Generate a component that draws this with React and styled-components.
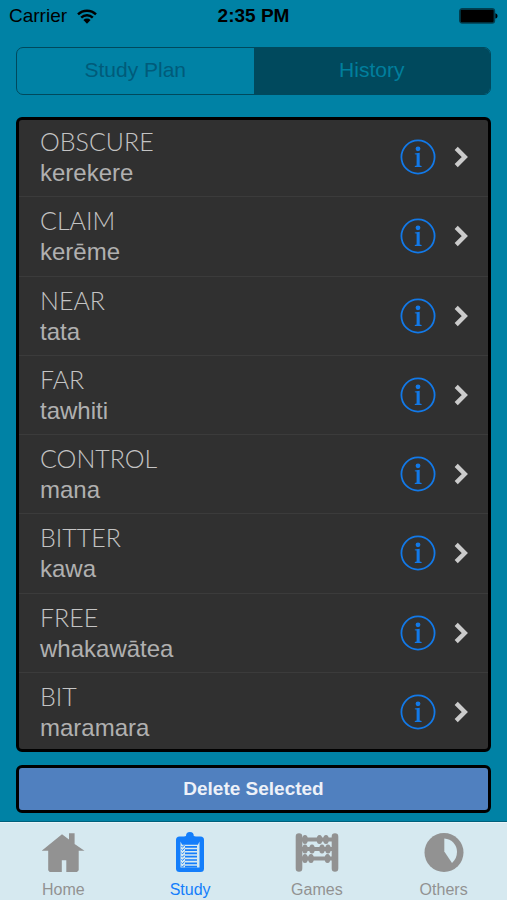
import { useState } from "react";
import styled, { createGlobalStyle } from "styled-components";

const WORDS = [
  { english: "OBSCURE", maori: "kerekere" },
  { english: "CLAIM", maori: "kerēme" },
  { english: "NEAR", maori: "tata" },
  { english: "FAR", maori: "tawhiti" },
  { english: "CONTROL", maori: "mana" },
  { english: "BITTER", maori: "kawa" },
  { english: "FREE", maori: "whakawātea" },
  { english: "BIT", maori: "maramara" },
];

const TABS = [
  { label: "Home", Icon: HomeIcon },
  { label: "Study", Icon: StudyIcon },
  { label: "Games", Icon: AbacusIcon },
  { label: "Others", Icon: PieIcon },
];

const BEADS = [
  [10, 7.5],
  [24.5, 7.5],
  [31, 7.5],
  [10, 17],
  [17, 17],
  [27, 17],
  [33, 17],
  [10, 26.5],
  [16, 26.5],
  [32.5, 26.5],
];

const App = () => {
  const [segment, setSegment] = useState("History");
  const [tab, setTab] = useState("Study");

  return (
    <Screen>
      <GlobalStyle />
      <StatusBar>
        <Carrier>
          Carrier
          <WifiIcon />
        </Carrier>
        <Clock>2:35 PM</Clock>
        <Battery>
          <BatteryIcon />
        </Battery>
      </StatusBar>

      <Content>
        <Segmented>
          {["Study Plan", "History"].map((name) => (
            <Segment
              key={name}
              type="button"
              aria-pressed={segment === name}
              $selected={segment === name}
              onClick={() => setSegment(name)}
            >
              {name}
            </Segment>
          ))}
        </Segmented>

        <Panel>
          <WordList>
            {WORDS.map(({ english, maori }) => (
              <WordRow key={english}>
                <Word>
                  <English>{english}</English>
                  <Maori>{maori}</Maori>
                </Word>
                <IconButton type="button" aria-label={`About ${english}`}>
                  <InfoIcon />
                </IconButton>
                <IconButton type="button" aria-label={`Open ${english}`}>
                  <ChevronIcon />
                </IconButton>
              </WordRow>
            ))}
          </WordList>
        </Panel>

        <DeleteButton type="button">Delete Selected</DeleteButton>
      </Content>

      <TabBar>
        {TABS.map(({ label, Icon }) => (
          <Tab
            key={label}
            href={`#${label.toLowerCase()}`}
            $active={tab === label}
            onClick={() => setTab(label)}
          >
            <Icon />
            {label}
          </Tab>
        ))}
      </TabBar>
    </Screen>
  );
};

export default App;

// Icons
function WifiIcon() {
  return (
    <svg width="20" height="15" viewBox="0 0 20 15" aria-hidden="true">
      <g fill="none" stroke="#000" strokeWidth="2.4">
        <path d="M1 5.4a12.8 12.8 0 0 1 18 0" />
        <path d="M4.2 8.7a8.2 8.2 0 0 1 11.6 0" />
      </g>
      <path d="M6.4 11a5.1 5.1 0 0 1 7.2 0L10 14.7z" />
    </svg>
  );
}

function BatteryIcon() {
  return (
    <svg width="39" height="16" viewBox="0 0 39 16" aria-hidden="true">
      <rect x="0.6" y="0.6" width="35" height="14.6" rx="2.6" fill="none" stroke="#003f50" strokeWidth="1.2" />
      <rect x="1.4" y="1.4" width="33.4" height="13" rx="1.4" />
      <path d="M36.4 5.2c2.8.6 2.8 4.8 0 5.4z" />
    </svg>
  );
}

function InfoIcon() {
  return (
    <svg width="36" height="36" viewBox="0 0 36 36" aria-hidden="true">
      <circle cx="18" cy="18" r="16.6" fill="none" stroke="#1279e8" strokeWidth="1.8" />
      <g fill="#1279e8">
        <circle cx="18" cy="9.8" r="2.4" />
        <path d="M14.8 14.4l4.9-.7v12.9l1.9.4v.9h-6.800V27l1.800-.4V15.500l-1.800-.3z" />
      </g>
    </svg>
  );
}

function ChevronIcon() {
  return (
    <svg width="14" height="22" viewBox="0 0 14 22" aria-hidden="true">
      <path d="M2.200 2.400l8.600 8.600-8.600 8.600" fill="none" stroke="#cbcbcb" strokeWidth="4.400" />
    </svg>
  );
}

function HomeIcon() {
  return (
    <svg width="44" height="42" viewBox="0 0 44 42" aria-hidden="true">
      <path
        fill="currentColor"
        d="M21 2.300L28 7.400V1.300h5.600v10.800l9.900 6.700h-5.800v19.400L36 40H25.300V28.200h-4.500V40H8.700L7.200 38.200V18.800H.7z"
      />
    </svg>
  );
}

function StudyIcon() {
  return (
    <svg width="30" height="42" viewBox="0 0 30 42" aria-hidden="true">
      <rect x="1" y="4.500" width="28" height="35.500" rx="3.500" fill="currentColor" />
      <path fill="currentColor" d="M8 5.500l3-1.500a3.900 3.900 0 0 1 7.800 0l3 1.500z" />
      <path fill="#d6e9f0" d="M5.500 9.500l1.600 3.300h15.800l1.600-3.300v26H5.500z" />
      <path
        stroke="currentColor"
        strokeWidth="1.700"
        d="M10 14.800h12M10 18.100h12M10 21.400h12M10 24.700h12M10 28h12M10 31.300h12M10 34.600h12"
      />
      <path
        fill="none"
        stroke="currentColor"
        strokeWidth="0.900"
        d="M6.500 14l1 1.300L9.500 13M6.500 17.300l1 1.300 2-2.300M6.500 20.600l1 1.300 2-2.300M6.500 23.900l1 1.300 2-2.300M6.500 27.200l1 1.300 2-2.300M6.500 30.500l1 1.300 2-2.300M6.500 33.800l1 1.300 2-2.300"
      />
    </svg>
  );
}

function AbacusIcon() {
  return (
    <svg width="44" height="42" viewBox="0 0 44 42" aria-hidden="true">
      <g fill="none" stroke="currentColor" strokeLinecap="round">
        <path strokeWidth="6.600" d="M4 4.500v32M40 4.500v32" />
        <path strokeWidth="3.800" d="M4 7.500h36M4 17h36M4 26.500h36" />
      </g>
      <g fill="currentColor">
        {BEADS.map(([x, y]) => (
          <ellipse key={`${x}-${y}`} cx={x} cy={y} rx="2.800" ry="4.500" />
        ))}
      </g>
    </svg>
  );
}

function PieIcon() {
  return (
    <svg width="40" height="42" viewBox="0 0 40 42" aria-hidden="true">
      <circle cx="20" cy="20.500" r="19.500" fill="currentColor" />
      <path fill="#d6e9f0" d="M20.300 6.500c7.500.4 12.700 6.500 12.700 13.200 0 4.600-1.700 8.300-5 11.200l-7.700-11.300z" />
    </svg>
  );
}

// Styled components
const GlobalStyle = createGlobalStyle`
  * {
    box-sizing: border-box;
  }
  body {
    margin: 0;
    background: #0082a5;
    font-family: "Liberation Sans", Arial, sans-serif;
  }
  svg {
    display: block;
  }
  button {
    font-family: inherit;
    cursor: pointer;
  }
`;

const Screen = styled.div`
  display: flex;
  flex-direction: column;
  min-height: 100vh;
`;

const StatusBar = styled.header`
  display: grid;
  grid-template-columns: 1fr auto 1fr;
  align-items: center;
  height: 32px;
  padding: 0 9px;
  font-size: 19px;
  color: #000;
`;

const Carrier = styled.span`
  display: flex;
  align-items: center;
  gap: 10px;
`;

const Clock = styled.time`
  font-weight: bold;
`;

const Battery = styled.span`
  justify-self: end;
`;

const Content = styled.main`
  flex: 1;
  display: flex;
  flex-direction: column;
  padding: 15px 16px 9px;
`;

const Segmented = styled.div`
  display: flex;
  height: 48px;
  margin-bottom: 22px;
  border: 1px solid #00495d;
  border-radius: 7px;
  overflow: hidden;
`;

const Segment = styled.button`
  flex: 1;
  padding: 0 0 2px;
  border: none;
  font-size: 21px;
  background: ${({ $selected }) => ($selected ? "#00495d" : "transparent")};
  color: ${({ $selected }) => ($selected ? "#007f9d" : "#005b7a")};
`;

const Panel = styled.section`
  flex: 1;
  display: flex;
  flex-direction: column;
  margin-bottom: 13px;
  border: 3px solid #000;
  border-radius: 6px;
  background: #303030;
  overflow: hidden;
`;

const WordList = styled.ul`
  flex: 1;
  display: flex;
  flex-direction: column;
  margin: -2px 0;
  padding: 0;
  list-style: none;
`;

const WordRow = styled.li`
  flex: 1 0 auto;
  display: flex;
  align-items: center;
  gap: 18px;
  min-height: 78px;
  padding: 0 20px 0 21px;

  & + & {
    border-top: 1px solid #3b3b3b;
  }
`;

const Word = styled.div`
  flex: 1;
  line-height: 31px;
  color: #b0b0b0;
`;

const English = styled.div`
  font-family: Lato, "Century Gothic", sans-serif;
  font-size: 25px;
  font-weight: 300;
  color: #c4c4c4;
`;

const Maori = styled.div`
  font-size: 24px;
`;

const IconButton = styled.button`
  padding: 0;
  border: none;
  background: none;
`;

const DeleteButton = styled.button`
  height: 48px;
  border: 3px solid #000;
  border-radius: 6px;
  background: #5080bf;
  color: #edf1f8;
  font-size: 19px;
  font-weight: bold;
`;

const TabBar = styled.nav`
  display: flex;
  height: 78px;
  border-top: 1px solid #e9f4f8;
  background: #d6e9f0;
  box-shadow: 0 -1px 0 #00607c;
`;

const Tab = styled.a`
  flex: 1;
  display: flex;
  flex-direction: column;
  align-items: center;
  gap: 6px;
  padding-top: 9px;
  font-size: 16px;
  line-height: 20px;
  text-decoration: none;
  color: ${({ $active }) => ($active ? "#147efb" : "#929292")};
`;
